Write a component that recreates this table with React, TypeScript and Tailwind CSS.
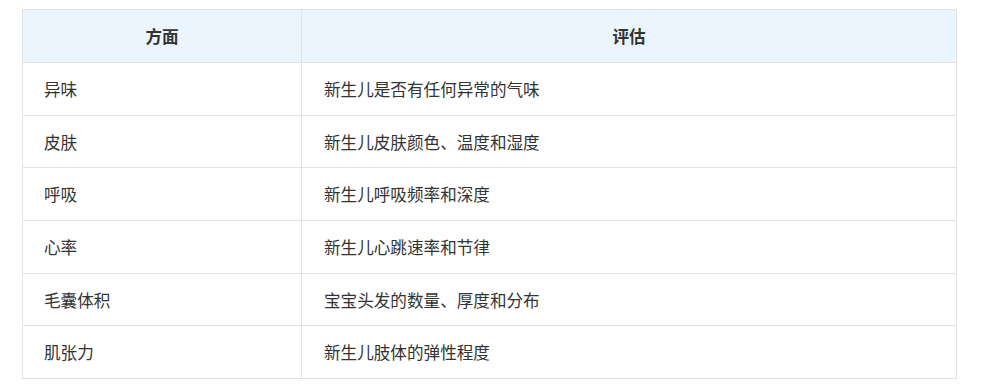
import React from "react";

const rows: [string, string][] = [
  ["异味", "新生儿是否有任何异常的气味"],
  ["皮肤", "新生儿皮肤颜色、温度和湿度"],
  ["呼吸", "新生儿呼吸频率和深度"],
  ["心率", "新生儿心跳速率和节律"],
  ["毛囊体积", "宝宝头发的数量、厚度和分布"],
  ["肌张力", "新生儿肢体的弹性程度"],
];

export default function App() {
  return (
    <div
      className="w-[992px] h-[389px] bg-white pt-[9px] pl-[22px]"
      style={{ fontFamily: '"Noto Sans CJK SC", "Noto Sans", sans-serif' }}
    >
      <table className="w-[935px] border-collapse text-[16.6px] text-[#333333] table-fixed">
        <colgroup>
          <col className="w-[279px]" />
          <col />
        </colgroup>
        <thead>
          <tr className="h-[53px] bg-[#eaf5fe]">
            <th className="border border-[#e2e2e2] font-bold text-center px-5 leading-[20px]">方面</th>
            <th className="border border-[#e2e2e2] font-bold text-center px-5 leading-[20px]">评估</th>
          </tr>
        </thead>
        <tbody>
          {rows.map(([a, b]) => (
            <tr key={a} className="h-[52.7px]">
              <td className="border border-[#e2e2e2] pl-[21px] pr-5 py-0 leading-[20px]">{a}</td>
              <td className="border border-[#e2e2e2] pl-[22px] pr-5 py-0 leading-[20px]">{b}</td>
            </tr>
          ))}
        </tbody>
      </table>
    </div>
  );
}
